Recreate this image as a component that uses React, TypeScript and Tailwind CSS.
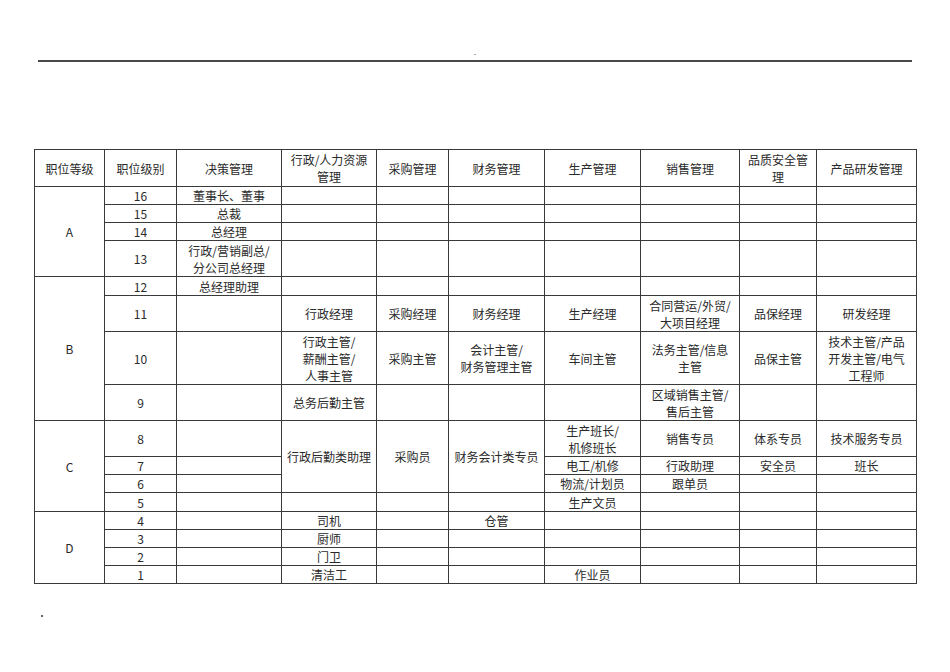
import React from "react";

// Job-grade matrix: grades A–D down the left, departments across the top.
type CellText = string | string[];

function Cell({ text = "", rowSpan }: { text?: CellText; rowSpan?: number }) {
  const lines = Array.isArray(text) ? text : [text];
  return (
    <td
      rowSpan={rowSpan}
      className="border border-[#3a3a3a] p-0 text-center align-middle leading-[17px] whitespace-nowrap"
    >
      {lines.map((l, i) => (
        <div key={i}>{l}</div>
      ))}
    </td>
  );
}

const Blank = ({ n }: { n: number }) => (
  <>
    {Array.from({ length: n }).map((_, i) => (
      <Cell key={i} />
    ))}
  </>
);

const widths = [70, 72, 105, 95, 72, 96, 96, 99, 77, 100];

export default function App() {
  return (
    <div
      className="w-[950px] h-[672px] bg-white text-[12px] text-[#2a2a2a] flex flex-col"
      style={{ fontFamily: '"Noto Sans CJK SC", "Noto Sans", sans-serif' }}
    >
      {/* page header rule */}
      <div className="h-[56px] flex items-end justify-center">
        <span className="w-[2px] h-[1px] bg-[#aaa] mb-[1px]" />
      </div>
      <div className="mx-[38px] h-[2px] bg-[#4a4a4a] mt-[4px]" />

      <div className="pl-[34px] pt-[87px]">
        <table className="table-fixed border-collapse w-[882px]">
          <colgroup>
            {widths.map((w, i) => (
              <col key={i} style={{ width: w }} />
            ))}
          </colgroup>
          <tbody>
            <tr className="h-[37px]">
              <Cell text="职位等级" />
              <Cell text="职位级别" />
              <Cell text="决策管理" />
              <Cell text={["行政/人力资源", "管理"]} />
              <Cell text="采购管理" />
              <Cell text="财务管理" />
              <Cell text="生产管理" />
              <Cell text="销售管理" />
              <Cell text={["品质安全管", "理"]} />
              <Cell text="产品研发管理" />
            </tr>

            <tr className="h-[18px]">
              <Cell text="A" rowSpan={4} />
              <Cell text="16" />
              <Cell text="董事长、董事" />
              <Blank n={7} />
            </tr>
            <tr className="h-[18px]">
              <Cell text="15" />
              <Cell text="总裁" />
              <Blank n={7} />
            </tr>
            <tr className="h-[18px]">
              <Cell text="14" />
              <Cell text="总经理" />
              <Blank n={7} />
            </tr>
            <tr className="h-[36px]">
              <Cell text="13" />
              <Cell text={["行政/营销副总/", "分公司总经理"]} />
              <Blank n={7} />
            </tr>

            <tr className="h-[19px]">
              <Cell text="B" rowSpan={4} />
              <Cell text="12" />
              <Cell text="总经理助理" />
              <Blank n={7} />
            </tr>
            <tr className="h-[36px]">
              <Cell text="11" />
              <Cell />
              <Cell text="行政经理" />
              <Cell text="采购经理" />
              <Cell text="财务经理" />
              <Cell text="生产经理" />
              <Cell text={["合同营运/外贸/", "大项目经理"]} />
              <Cell text="品保经理" />
              <Cell text="研发经理" />
            </tr>
            <tr className="h-[53px]">
              <Cell text="10" />
              <Cell />
              <Cell text={["行政主管/", "薪酬主管/", "人事主管"]} />
              <Cell text="采购主管" />
              <Cell text={["会计主管/", "财务管理主管"]} />
              <Cell text="车间主管" />
              <Cell text={["法务主管/信息", "主管"]} />
              <Cell text="品保主管" />
              <Cell text={["技术主管/产品", "开发主管/电气", "工程师"]} />
            </tr>
            <tr className="h-[36px]">
              <Cell text="9" />
              <Cell />
              <Cell text="总务后勤主管" />
              <Blank n={3} />
              <Cell text={["区域销售主管/", "售后主管"]} />
              <Blank n={2} />
            </tr>

            <tr className="h-[36px]">
              <Cell text="C" rowSpan={4} />
              <Cell text="8" />
              <Cell />
              <Cell text="行政后勤类助理" rowSpan={3} />
              <Cell text="采购员" rowSpan={3} />
              <Cell text="财务会计类专员" rowSpan={3} />
              <Cell text={["生产班长/", "机修班长"]} />
              <Cell text="销售专员" />
              <Cell text="体系专员" />
              <Cell text="技术服务专员" />
            </tr>
            <tr className="h-[18px]">
              <Cell text="7" />
              <Cell />
              <Cell text="电工/机修" />
              <Cell text="行政助理" />
              <Cell text="安全员" />
              <Cell text="班长" />
            </tr>
            <tr className="h-[18px]">
              <Cell text="6" />
              <Cell />
              <Cell text="物流/计划员" />
              <Cell text="跟单员" />
              <Blank n={2} />
            </tr>
            <tr className="h-[19px]">
              <Cell text="5" />
              <Blank n={4} />
              <Cell text="生产文员" />
              <Blank n={3} />
            </tr>

            <tr className="h-[18px]">
              <Cell text="D" rowSpan={4} />
              <Cell text="4" />
              <Cell />
              <Cell text="司机" />
              <Cell />
              <Cell text="仓管" />
              <Blank n={4} />
            </tr>
            <tr className="h-[18px]">
              <Cell text="3" />
              <Cell />
              <Cell text="厨师" />
              <Blank n={6} />
            </tr>
            <tr className="h-[18px]">
              <Cell text="2" />
              <Cell />
              <Cell text="门卫" />
              <Blank n={6} />
            </tr>
            <tr className="h-[18px]">
              <Cell text="1" />
              <Cell />
              <Cell text="清洁工" />
              <Blank n={2} />
              <Cell text="作业员" />
              <Blank n={3} />
            </tr>
          </tbody>
        </table>
      </div>

      <div className="pl-[41px] pt-[31px]">
        <span className="block w-[2px] h-[2px] bg-[#666]" />
      </div>
    </div>
  );
}
